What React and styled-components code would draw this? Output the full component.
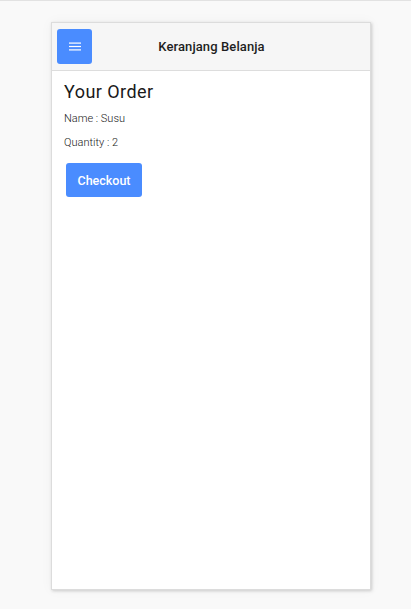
import React from "react";
import styled, { createGlobalStyle } from "styled-components";

const Global = createGlobalStyle`
  html, body { margin: 0; padding: 0; background: #f9f9f9; }
  body { font-family: Roboto, "Noto Sans", sans-serif; border-top: 1px solid #e2e2e2; }
`;

const Page = styled.div`
  display: flex;
  justify-content: center;
  padding: 21px 0 0 11px;
  min-height: 608px;
  box-sizing: border-box;
`;

const Card = styled.div`
  width: 318px;
  height: 566px;
  background: #fff;
  border: 1px solid #dcdcdc;
  box-shadow: 1px 1px 3px rgba(0,0,0,0.18), 0 0 12px rgba(0,0,0,0.04);
  display: flex;
  flex-direction: column;
`;

const Header = styled.header`
  height: 47px;
  background: #f6f6f6;
  border-bottom: 1px solid #dddddd;
  display: flex;
  align-items: center;
  padding: 0 5px;
`;

const MenuButton = styled.button`
  width: 35px;
  height: 35px;
  border: none;
  border-radius: 3px;
  background: #4a8cff;
  display: flex;
  align-items: center;
  justify-content: center;
  padding: 0;
`;

const Title = styled.h1`
  flex: 1;
  margin: 0 34px 0 0;
  text-align: center;
  font-size: 13px;
  font-weight: 500;
  color: #1e1e1e;
  letter-spacing: 0.1px;
`;

const Body = styled.main`
  padding: 10px 12px;
  display: flex;
  flex-direction: column;
  align-items: flex-start;
`;

const Heading = styled.h2`
  margin: 0 0 10px 0;
  font-size: 18px;
  font-weight: 400;
  color: #1a1a1a;
  line-height: 21px;
  letter-spacing: 0.45px;
`;

const Line = styled.p`
  margin: 0 0 10px 0;
  font-size: 11px;
  font-weight: 300;
  color: #222;
  line-height: 14px;
`;

const Checkout = styled.button`
  margin: 3px 0 0 2px;
  width: 76px;
  height: 34px;
  border: none;
  border-radius: 3px;
  background: #4a8cff;
  color: #fff;
  font-family: Roboto, sans-serif;
  font-size: 12.5px;
  font-weight: 500;
`;

export default function App() {
  return (
    <>
      <Global />
      <Page>
        <Card>
          <Header>
            <MenuButton>
              <svg width="12" height="9" viewBox="0 0 12 9">
                <rect x="0" y="0.5" width="12" height="1.2" fill="#fff" />
                <rect x="0" y="3.9" width="12" height="1.2" fill="#fff" />
                <rect x="0" y="7.3" width="12" height="1.2" fill="#fff" />
              </svg>
            </MenuButton>
            <Title>Keranjang Belanja</Title>
          </Header>
          <Body>
            <Heading>Your Order</Heading>
            <Line>Name : Susu</Line>
            <Line>Quantity : 2</Line>
            <Checkout>Checkout</Checkout>
          </Body>
        </Card>
      </Page>
    </>
  );
}
